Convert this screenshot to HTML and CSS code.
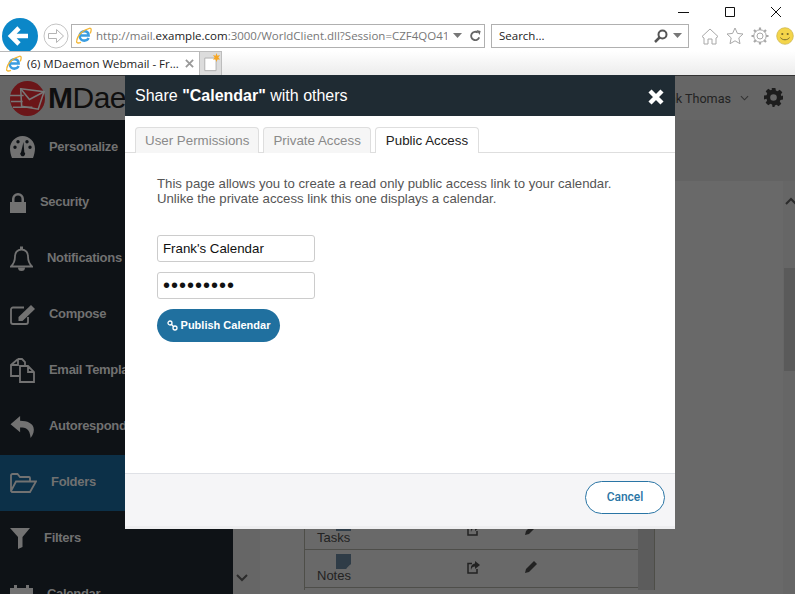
FILE: index.html
```html
<!DOCTYPE html>
<html lang="en">
<head>
<meta charset="utf-8">
<title>MDaemon Webmail</title>
<link rel="stylesheet" href="styles.css">
</head>
<body>
<div class="chrome">
  <div class="window-controls">
    <svg class="win-icon" viewBox="0 0 12 12"><path d="M0 6.500h11" stroke="#111" fill="none"/></svg>
    <svg class="win-icon" viewBox="0 0 12 12"><path d="M1.500 1.500h9v9h-9z" stroke="#111" fill="none"/></svg>
    <svg class="win-icon" viewBox="0 0 12 12"><path d="M1 1l10 10M11 1L1 11" stroke="#111" fill="none"/></svg>
  </div>
  <div class="toolbar">
    <svg class="back" viewBox="0 0 36 36"><circle cx="18" cy="18" r="18" fill="#0b87c8"/><path d="M26 18H10M17 10l-8 8 8 8" stroke="#fff" stroke-width="4.600" fill="none"/></svg>
    <svg class="forward" viewBox="0 0 26 26"><circle cx="13" cy="13" r="12" fill="#fff" stroke="#c4c4c4"/><path d="M5.500 10.500h8v-4l7 6.500-7 6.500v-4h-8z" fill="none" stroke="#b4b4b4"/></svg>
    <div class="address">
      <svg class="ie" viewBox="0 0 20 20"><use href="#ie-logo"/></svg>
      <div class="url"><span>http://mail.</span><b>example.com</b><span>:3000/WorldClient.dll?Session=CZF4QO41</span></div>
      <svg class="caret" viewBox="0 0 9 5"><path d="M0 0h9L4.500 5z" fill="#777"/></svg>
      <svg class="refresh" viewBox="0 0 14 14"><path d="M11 8.500A4.500 4.500 0 1 1 9.500 3.300" fill="none" stroke="#666" stroke-width="2"/><path d="M8 .5l4.500 1-1 4.500z" fill="#666"/></svg>
    </div>
    <div class="search">
      <span class="search-text">Search...</span>
      <svg class="lens" viewBox="0 0 14 14"><circle cx="8.500" cy="5.500" r="4" fill="none" stroke="#555" stroke-width="2"/><path d="M5.500 8.500L1 13" stroke="#555" stroke-width="2.500"/></svg>
      <svg class="caret" viewBox="0 0 9 5"><path d="M0 0h9L4.500 5z" fill="#777"/></svg>
    </div>
    <div class="tools">
      <svg class="tool" viewBox="0 0 18 18"><path d="M1 9.500L9 2l8 7.500-2 1.500v6h-4v-5H7v5H3v-6z" fill="#fff" stroke="#a8a8a8"/></svg>
      <svg class="tool" viewBox="0 0 18 18"><path d="M9 1l2.400 5.400 5.600.6-4.200 3.900 1.200 5.800L9 13.800l-5 2.900 1.200-5.800L1 7l5.600-.6z" fill="#fff" stroke="#a8a8a8"/></svg>
      <svg class="tool" viewBox="0 0 18 18"><circle cx="9" cy="9" r="3" fill="none" stroke="#a8a8a8"/><circle cx="9" cy="9" r="6.200" fill="none" stroke="#a8a8a8" stroke-width="1"/><path d="M9 .5v2.500M9 15v2.500M.5 9H3M15 9h2.500M3 3l1.800 1.800M13.200 13.200L15 15M15 3l-1.800 1.800M4.800 13.200L3 15" stroke="#a8a8a8" stroke-width="2.200"/></svg>
      <svg class="tool smile" viewBox="0 0 18 18"><circle cx="9" cy="9" r="8.300" fill="#f4d54a" stroke="#c9b24a" stroke-width=".7"/><circle cx="6.300" cy="7" r="1.100" fill="#776a2a"/><circle cx="11.700" cy="7" r="1.100" fill="#776a2a"/><path d="M4.500 10.500c1.500 3 7.500 3 9 0" stroke="#776a2a" fill="none"/></svg>
    </div>
  </div>
  <div class="tabstrip">
    <div class="browser-tab">
      <svg class="ie" viewBox="0 0 20 20"><use href="#ie-logo"/></svg>
      <span class="browser-tab-title">(6) MDaemon Webmail - Fr...</span>
      <svg class="tab-close" viewBox="0 0 10 10"><path d="M1 1l8 8M9 1L1 9" stroke="#999" stroke-width="2"/></svg>
    </div>
    <div class="new-tab">
      <svg viewBox="0 0 20 22" class="new-tab-icon"><path d="M2 5.500h12.500v14H2z" fill="#fff" stroke="#aaa"/><path d="M15 0l1 3 3-1-2 3 2 2-3 0-1 3-1-3-3 0 2-2-2-3 3 1z" fill="#f6a623"/></svg>
    </div>
  </div>
</div>

<div class="app">
  <header class="app-header">
    <div class="brand">
      <svg class="brand-mark" viewBox="0 0 36 36"><circle cx="18" cy="18" r="18" fill="#6b1518"/><path d="M11 8l24 3-6 18-17-3z" fill="#6b1518" stroke="#777" stroke-width="1.600"/><path d="M11 8l9 11 15-8M0 15h14M1 21h12M3 27h20" fill="none" stroke="#777" stroke-width="1.600"/></svg>
      <span class="brand-name"><b>M</b>Daemon</span>
    </div>
    <div class="user">
      <span class="user-name">Frank Thomas</span>
      <svg class="user-caret" viewBox="0 0 10 6"><path d="M1 1l4 4 4-4" fill="none" stroke="#333" stroke-width="1.200"/></svg>
      <svg class="gear" viewBox="0 0 20 20"><path fill="#1d1d1d" fill-rule="evenodd" d="M8 0h4l.5 2.700 1.700.7 2.300-1.600 2.800 2.800-1.600 2.300.7 1.700L20 8v4l-2.700.5-.7 1.700 1.600 2.300-2.800 2.800-2.300-1.600-1.700.7L11 20H9l-.5-2.700-1.700-.7-2.300 1.600-2.800-2.800 1.600-2.300-.7-1.700L0 12V8l2.700-.5.7-1.700L1.800 3.500 4.500.8l2.300 1.600 1.700-.7zM10 6.500a3.500 3.500 0 1 0 0 7 3.500 3.500 0 0 0 0-7z"/></svg>
    </div>
  </header>

  <div class="workspace">
    <nav class="sidebar">
      <div class="nav-row">
        <svg class="nav-icon w25" viewBox="0 0 25 22"><path fill="#727272" fill-rule="evenodd" d="M12.500 0C5.600 0 0 5.600 0 12.500c0 3 .8 6.500 2 9.500h21c1.200-3 2-6.500 2-9.500C25 5.600 19.400 0 12.500 0zM5 9.500a1.700 1.700 0 1 1 0 3.400 1.700 1.700 0 0 1 0-3.400zM8 4a1.700 1.700 0 1 1 0 3.400A1.700 1.700 0 0 1 8 4zm9 0a1.700 1.700 0 1 1 0 3.400A1.700 1.700 0 0 1 17 4zm3 5.500a1.700 1.700 0 1 1 0 3.400 1.700 1.700 0 0 1 0-3.400zM13.500 6l.8 10a2.400 2.400 0 1 1-3.200 0z"/></svg>
        <span class="nav-label">Personalize</span>
      </div>
      <div class="nav-row">
        <svg class="nav-icon w16" viewBox="0 0 16 20"><path fill="#727272" fill-rule="evenodd" d="M8 0a6 6 0 0 0-6 6v3H0v11h16V9h-2V6a6 6 0 0 0-6-6zm0 2.500A3.500 3.500 0 0 1 11.500 6v3h-7V6A3.500 3.500 0 0 1 8 2.500z"/></svg>
        <span class="nav-label">Security</span>
      </div>
      <div class="nav-row">
        <svg class="nav-icon w23" viewBox="0 0 23 25"><path fill="none" stroke="#727272" stroke-width="1.800" d="M11.500 3C7 3 5 6.500 5 10c0 5-2 8-4 10h21c-2-2-4-5-4-10 0-3.500-2-7-6.500-7z"/><path fill="#727272" d="M10 0h3v3h-3zM8 21h7a3.500 3.500 0 0 1-7 0z"/></svg>
        <span class="nav-label">Notifications</span>
      </div>
      <div class="nav-row">
        <svg class="nav-icon w25" viewBox="0 0 25 20"><path fill="none" stroke="#727272" stroke-width="1.800" d="M14 2.500H3a2 2 0 0 0-2 2V17a2 2 0 0 0 2 2h13a2 2 0 0 0 2-2v-5"/><path fill="#727272" d="M21 0l4 4L12.500 16H8.500v-4z"/></svg>
        <span class="nav-label">Compose</span>
      </div>
      <div class="nav-row">
        <svg class="nav-icon w25 h25" viewBox="0 0 25 25"><path fill="none" stroke="#727272" stroke-width="1.800" d="M8 1h4l3 3v3M8 1L1 7v11h8M8 1v6H1M10 8h8l6 6v10H10zM18 8v6h6"/></svg>
        <span class="nav-label">Email Templates</span>
      </div>
      <div class="nav-row">
        <svg class="nav-icon w25" viewBox="0 0 25 23"><path fill="#727272" d="M10 0L0 8.500 10 17v-5c6 0 10 1 11 11 3-4 4-8 3-11-1-4-6-7-14-7z"/></svg>
        <span class="nav-label">Autoresponder</span>
      </div>
      <div class="nav-row nav-row-active">
        <svg class="nav-icon w27" viewBox="0 0 27 20"><path fill="none" stroke="#727272" stroke-width="1.800" d="M1 18V2.500A1.500 1.500 0 0 1 2.500 1h5l2.500 3h9a1 1 0 0 1 1 1v3M1 18l5-9.500h20L20 19H2z"/></svg>
        <span class="nav-label">Folders</span>
      </div>
      <div class="nav-row">
        <svg class="nav-icon w20" viewBox="0 0 20 21"><path fill="#727272" d="M0 0h20l-7.500 9v10L8 21V9z"/></svg>
        <span class="nav-label">Filters</span>
      </div>
      <div class="nav-row">
        <svg class="nav-icon w23" viewBox="0 0 23 22"><path fill="#727272" fill-rule="evenodd" d="M0 4h4V1h3v3h9V1h3v3h4v18H0zm2 6v3h4v-3zm6 0v3h3v-3zm5 0v3h3v-3zm5 0v3h3v-3zM2 15v5h4v-5zm6 0v5h3v-5zm5 0v5h3v-5zm5 0v5h3v-5z"/></svg>
        <span class="nav-label">Calendar</span>
      </div>
    </nav>

    <div class="side-scroll">
      <svg class="chevron" viewBox="0 0 12 8"><path d="M1 1l5 5 5-5" fill="none" stroke="#2b2b2b" stroke-width="2"/></svg>
    </div>

    <main class="main">
      <div class="title-band"></div>
      <div class="panel-wrap">
        <section class="panel">
          <div class="folder-table">
            <div class="rows">
              <div class="row">
                <div class="row-name">
                  <svg class="row-icon" viewBox="0 0 15 15"><path fill="#2f3c47" d="M0 0h15v15H0z"/></svg>
                  <span>Tasks</span>
                </div>
                <svg class="act share" viewBox="0 0 13 13"><path fill="none" stroke="#222" stroke-width="1.500" d="M5 2.500H1v9.500h9V8"/><path fill="#222" d="M8 0l5 4-5 4V5.500C6 5.500 4.500 6.500 4 9c-.5-4 1-6 4-6.500z"/></svg>
                <svg class="act pencil" viewBox="0 0 12 12"><path fill="#222" d="M9 0l3 3-8 8-4 1 1-4z"/></svg>
              </div>
              <div class="row">
                <div class="row-name">
                  <svg class="row-icon" viewBox="0 0 15 15"><path fill="#2f3c47" d="M0 0h15v10l-5 5H0z"/><path fill="#666" d="M14 11v3h-3z"/></svg>
                  <span>Notes</span>
                </div>
                <svg class="act share" viewBox="0 0 13 13"><path fill="none" stroke="#222" stroke-width="1.500" d="M5 2.500H1v9.500h9V8"/><path fill="#222" d="M8 0l5 4-5 4V5.500C6 5.500 4.500 6.500 4 9c-.5-4 1-6 4-6.500z"/></svg>
                <svg class="act pencil" viewBox="0 0 12 12"><path fill="#222" d="M9 0l3 3-8 8-4 1 1-4z"/></svg>
              </div>
            </div>
            <div class="table-scroll"></div>
          </div>
        </section>
        <div class="main-scroll">
          <svg class="chevron-up" viewBox="0 0 12 8"><path d="M1 7l5-5 5 5" fill="none" stroke="#2b2b2b" stroke-width="2"/></svg>
          <div class="main-thumb"></div>
        </div>
      </div>
    </main>
  </div>

  <div class="modal">
    <div class="modal-head">
      <div class="modal-title">Share <b>"Calendar"</b> with others</div>
      <svg class="modal-close" viewBox="0 0 16 16"><path d="M2 2l12 12M14 2L2 14" stroke="#fff" stroke-width="4.400"/></svg>
    </div>
    <div class="modal-tabs">
      <div class="modal-tab">User Permissions</div>
      <div class="modal-tab">Private Access</div>
      <div class="modal-tab modal-tab-active">Public Access</div>
    </div>
    <div class="modal-body">
      <p class="intro">This page allows you to create a read only public access link to your calendar.<br>Unlike the private access link this one displays a calendar.</p>
      <input class="field" type="text" value="Frank's Calendar">
      <input class="field field-secret" type="password" value="123456789">
      <button class="publish" type="button">
        <svg class="link-icon" viewBox="0 0 11 11"><circle cx="3" cy="3" r="2" fill="none" stroke="#fff" stroke-width="1.300"/><circle cx="8" cy="8" r="2" fill="none" stroke="#fff" stroke-width="1.300"/><path d="M4 4l3 3" stroke="#fff" stroke-width="1.300"/></svg>
        Publish Calendar
      </button>
    </div>
    <div class="modal-foot">
      <button class="cancel" type="button">Cancel</button>
    </div>
  </div>
</div>

<svg class="defs" width="0" height="0">
  <defs>
    <g id="ie-logo">
      <path d="M6 10h10C16 7 14 5 11 5S5.500 7.300 5.500 10.500 8 16 11 16c2 0 4-1 5-3" fill="none" stroke="#3a9de0" stroke-width="3"/>
      <path d="M2 16C3 9 10 3 17 1.500c2.500-.5 2.500 2.500 1 6M2 16c-.8 3 1.500 3.500 5 2" fill="none" stroke="#f2b533" stroke-width="1.500"/>
    </g>
  </defs>
</svg>
</body>
</html>
```
FILE: styles.css
```css
* { box-sizing: border-box; }
html, body { margin: 0; padding: 0; height: 100%; overflow: hidden; }
body {
  display: flex;
  flex-direction: column;
  background: #fff;
  font-family: "Liberation Sans", Arial, sans-serif;
}
.defs { position: absolute; }

/* Browser chrome */
.chrome { flex: none; height: 75px; background: #fff; }
.window-controls { height: 24px; display: flex; justify-content: flex-end; gap: 34px; padding: 6px 13px 0 0; }
.win-icon { width: 12px; height: 12px; }
.toolbar { height: 23px; display: flex; align-items: center; padding-left: 2px; }
.back { width: 36px; height: 36px; margin: -7px 0; flex: none; }
.forward { width: 26px; height: 26px; margin: -2px 2px -2px 5px; flex: none; }
.address, .search {
  height: 24px;
  border: 1px solid #b0b0b0;
  display: flex;
  align-items: center;
  background: #fff;
  flex: none;
}
.address { width: 414px; padding: 0 4px 0 3px; margin-right: 6px; }
.search { width: 198px; padding: 0 6px 0 7px; }
.ie { width: 17px; height: 17px; flex: none; }
.url {
  flex: none;
  width: 351px;
  margin-left: 4px;
  overflow: hidden;
  white-space: nowrap;
  font: 11.5px "Open Sans", sans-serif;
  color: #777;
}
.url b { font-weight: 400; color: #222; }
.caret { width: 9px; height: 5px; flex: none; }
.address .caret { margin-left: 6px; }
.refresh { width: 13px; height: 14px; margin-left: 7px; flex: none; }
.search-text { flex: 1; font: 11.5px "Open Sans", sans-serif; color: #222; }
.lens { width: 14px; height: 14px; margin-right: 5px; flex: none; }
.tools { display: flex; align-items: center; gap: 7px; margin-left: 12px; }
.tool { width: 18px; height: 18px; flex: none; }
.tabstrip {
  height: 24px;
  margin-top: 4px;
  display: flex;
  background: linear-gradient(#fff, #ececec);
}
.browser-tab {
  width: 200px;
  display: flex;
  align-items: center;
  padding-left: 5px;
  background: #fff;
  border: 1px solid #b9b9b9;
  border-width: 1px 1px 0 0;
}
.browser-tab-title { width: 158px; font: 11.5px "Open Sans", sans-serif; color: #222; white-space: nowrap; margin-left: 5px; }
.tab-close { width: 9px; height: 9px; flex: none; }
.new-tab {
  width: 22px;
  background: #dcdcdc;
  border: 1px solid #bdbdbd;
  border-width: 1px 1px 0 0;
  padding: 1px 0 0 3px;
}
.new-tab-icon { width: 18px; height: 20px; display: block; }

/* App behind the dialog (dimmed) */
.app { flex: 1; min-height: 0; position: relative; display: flex; flex-direction: column; background: #666; }
.app-header {
  flex: none;
  height: 45px;
  border-top: 1px solid #333;
  background: #666;
  display: flex;
  align-items: center;
  justify-content: space-between;
  padding: 0 12px 0 10px;
}
.brand { display: flex; align-items: center; gap: 3px; }
.brand-mark { width: 35px; height: 35px; flex: none; }
.brand-name { font-size: 30px; letter-spacing: -0.5px; color: #0f0f0f; line-height: 1; }
.user { display: flex; align-items: center; }
.user-name { font: 12.6px Roboto, sans-serif; color: #232323; }
.user-caret { width: 9px; height: 6px; margin: 0 15px 0 9px; }
.gear { width: 19px; height: 19px; margin-bottom: 2px; }

.workspace { flex: 1; min-height: 0; display: flex; overflow: hidden; }
.sidebar { flex: none; width: 233px; background: #0e1216; }
.nav-row {
  height: 56px;
  display: flex;
  align-items: center;
  gap: 14px;
  padding: 0 0 1px 10px;
  white-space: nowrap;
}
.nav-row:first-child { height: 55px; }
.nav-row-active { background: #0c3048; }
.nav-label { font: 700 13px "Liberation Sans", sans-serif; letter-spacing: -0.3px; color: #717171; padding-bottom: 2px; }
.nav-icon { flex: none; }
.w16 { width: 16px; height: 20px; }
.w20 { width: 20px; height: 21px; }
.w23 { width: 23px; height: 26px; }
.w25 { width: 25px; height: 22px; }
.h25 { height: 25px; }
.w27 { width: 27px; height: 20px; }

.side-scroll {
  flex: none;
  width: 17px;
  background: #666;
  display: flex;
  align-items: flex-end;
  justify-content: flex-start;
  padding: 0 0 12px 3px;
}
.chevron { width: 12px; height: 8px; }
.main { flex: 1; min-width: 0; display: flex; flex-direction: column; }
.title-band { flex: none; height: 61px; background: #636363; }
.panel-wrap { flex: 1; min-height: 0; display: flex; }
.panel {
  flex: 1;
  min-width: 0;
  margin-left: 10px;
  padding: 0 0 4px 44px;
  background: #696969;
  display: flex;
  flex-direction: column;
  justify-content: flex-end;
}
.folder-table { display: flex; width: 351px; border: solid #4e4e48; border-width: 0 1px 0 1px; }
.rows { flex: none; width: 333px; padding-bottom: 2px; }
.row {
  height: 38px;
  position: relative;
  display: flex;
  align-items: flex-start;
  border-bottom: 1px solid #4e4e4a;
  padding-left: 12px;
}
.row-name { width: 150px; display: flex; flex-direction: column; align-items: flex-start; font: 13px "Liberation Sans", sans-serif; color: #222; line-height: 16px; padding-top: 4px; }
.row-name span { margin-top: -1px; }
.row-icon { width: 15px; height: 15px; margin-left: 19px; display: block; }
.act { margin-top: 11px; width: 13px; height: 13px; flex: none; }
.pencil { margin-left: 45px; width: 12px; height: 12px; }
.table-scroll { flex: 1; background: #5c5c5c; }
.main-scroll { flex: none; width: 12px; background: #666; padding: 16px 0 0 1px; }
.chevron-up { width: 12px; height: 8px; display: block; margin-left: 1px; }
.main-thumb { height: 103px; margin-top: 63px; background: #5a5a5a; }

/* Dialog */
.modal {
  position: absolute;
  left: 125px;
  top: 0;
  width: 550px;
  height: 454px;
  display: flex;
  flex-direction: column;
  background: #fff;
}
.modal-head {
  flex: none;
  height: 41px;
  background: #1f2b33;
  display: flex;
  align-items: center;
  justify-content: space-between;
  padding: 0 11px 0 10px;
}
.modal-title { font-size: 16px; color: #fff; }
.modal-close { width: 16px; height: 16px; margin-top: 2px; }
.modal-tabs {
  flex: none;
  height: 37px;
  padding: 11px 0 0 10px;
  display: flex;
  gap: 4px;
  border-bottom: 1px solid #dedede;
}
.modal-tab {
  height: 26px;
  padding: 0 9px;
  line-height: 25px;
  font-size: 13.33px;
  color: #8a8a8a;
  background: #f6f6f6;
  border: 1px solid #dedede;
  border-bottom: 0;
  border-radius: 4px 4px 0 0;
}
.modal-tab-active { background: #fff; color: #222; padding: 0 10px; }
.modal-body { flex: 1; padding: 23px 32px 0; display: flex; flex-direction: column; align-items: flex-start; }
.intro { margin: 0 0 29px; font-size: 13.2px; line-height: 15px; color: #555; white-space: nowrap; }
.field {
  width: 158px;
  height: 27px;
  margin: 0 0 10px;
  padding: 0 5px;
  border: 1px solid #ccc;
  border-radius: 3px;
  font: 13.3px "Liberation Sans", sans-serif;
  color: #111;
  background: #fff;
  outline: none;
}
.field-secret { font-size: 20px; letter-spacing: 1px; }
.publish {
  width: 123px;
  height: 33px;
  padding: 0 0 1px;
  border: 0;
  border-radius: 17px;
  background: #20709f;
  color: #fff;
  font: 700 11px "Liberation Sans", sans-serif;
  display: flex;
  align-items: center;
  justify-content: center;
  gap: 3px;
}
.link-icon { width: 11px; height: 11px; }
.modal-foot {
  flex: none;
  height: 56px;
  background: #f5f5f7;
  border-top: 1px solid #dfe1e6;
  border-bottom: 3px solid #eeeef0;
  display: flex;
  justify-content: flex-end;
  padding: 7px 10px 0 0;
}
.cancel {
  width: 80px;
  height: 33px;
  padding: 0 0 1px;
  background: #fff;
  border: 1px solid #2a75a5;
  border-radius: 17px;
  color: #2a75a5;
  font: 500 12px Roboto, sans-serif;
}
```
